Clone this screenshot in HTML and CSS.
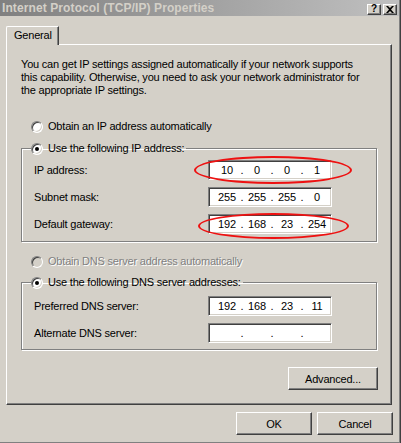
FILE: index.html
```html
<!DOCTYPE html>
<html lang="en">
<head>
  <meta charset="UTF-8">
  <title>Internet Protocol (TCP/IP) Properties</title>
  <link rel="stylesheet" href="styles.css">
</head>
<body>
  <div class="window">
    <!-- Title bar -->
    <div class="titlebar">
      <span class="title">Internet Protocol (TCP/IP) Properties</span>
      <div class="caption-btns">
        <div class="cap-btn">?</div>
        <div class="cap-btn">
          <svg width="8" height="7" viewBox="0 0 8 7"><path d="M0 0h2l2 2 2-2h2L5 3.5 8 7H6L4 5 2 7H0l3-3.5z" fill="#000"/></svg>
        </div>
      </div>
    </div>

    <!-- Tabs -->
    <div class="tabs">
      <div class="tab">General</div>
    </div>

    <div class="panel">
      <p class="intro">You can get IP settings assigned automatically if your network supports<br>this capability. Otherwise, you need to ask your network administrator for<br>the appropriate IP settings.</p>

      <div class="radio radio-first"><span class="dot"></span>Obtain an IP address automatically</div>

      <fieldset class="group group-ip">
        <legend><div class="radio"><span class="dot checked"></span>Use the following IP address:</div></legend>
        <div class="row">
          <span class="label">IP address:</span>
          <div class="ip-field">
            <span>10</span><i>.</i><span>0</span><i>.</i><span>0</span><i>.</i><span>1</span>
            <span class="mark mark-ip"></span>
          </div>
        </div>
        <div class="row">
          <span class="label">Subnet mask:</span>
          <div class="ip-field">
            <span>255</span><i>.</i><span>255</span><i>.</i><span>255</span><i>.</i><span>0</span>
          </div>
        </div>
        <div class="row">
          <span class="label">Default gateway:</span>
          <div class="ip-field">
            <span>192</span><i>.</i><span>168</span><i>.</i><span>23</span><i>.</i><span>254</span>
            <span class="mark mark-gw"></span>
          </div>
        </div>
      </fieldset>

      <div class="radio radio-dns disabled"><span class="dot"></span>Obtain DNS server address automatically</div>

      <fieldset class="group group-dns">
        <legend><div class="radio"><span class="dot checked"></span>Use the following DNS server addresses:</div></legend>
        <div class="row">
          <span class="label">Preferred DNS server:</span>
          <div class="ip-field">
            <span>192</span><i>.</i><span>168</span><i>.</i><span>23</span><i>.</i><span>11</span>
          </div>
        </div>
        <div class="row">
          <span class="label">Alternate DNS server:</span>
          <div class="ip-field">
            <span></span><i>.</i><span></span><i>.</i><span></span><i>.</i><span></span>
          </div>
        </div>
      </fieldset>

      <div class="adv-row">
        <button class="btn btn-adv">Advanced...</button>
      </div>
    </div>

    <div class="footer">
      <button class="btn">OK</button>
      <button class="btn">Cancel</button>
    </div>
  </div>
</body>
</html>
```

FILE: styles.css
```css
body {
  margin: 0;
  padding: 0;
  background: #d4d0c8;
  font-family: 'Liberation Sans', Arial, sans-serif;
  font-size: 11px;
  letter-spacing: -0.2px;
  color: #000;
}

.window {
  width: 401px;
  height: 443px;
  box-sizing: border-box;
  background: #d4d0c8;
  box-shadow: inset -1px 0 #404040, inset -2px 0 #808080, inset 0 -1px #808080;
  overflow: hidden;
}

/* Title bar */
.titlebar {
  height: 16px;
  margin-right: 2px;
  background: linear-gradient(to right, #808080, #c0c0c0);
  display: flex;
  align-items: center;
  justify-content: space-between;
  padding-left: 2px;
}

.title {
  color: #d4d0c8;
  font-weight: bold;
  font-size: 12px;
  letter-spacing: 0.1px;
  white-space: nowrap;
}

.caption-btns {
  display: flex;
  gap: 2px;
  margin-right: 2px;
  margin-top: 2px;
}

.cap-btn {
  width: 14px;
  height: 11px;
  box-sizing: border-box;
  background: #d4d0c8;
  border: 1px solid;
  border-color: #fff #404040 #404040 #fff;
  box-shadow: inset -1px -1px #808080;
  display: flex;
  align-items: center;
  justify-content: center;
  font-weight: bold;
  font-size: 10px;
  line-height: 1;
}

/* Tabs */
.tabs {
  padding: 10px 0 0 6px;
  height: 18px;
  display: flex;
}

.tab {
  width: 53px;
  height: 19px;
  box-sizing: border-box;
  border-top: 1px solid #fff;
  border-left: 1px solid #fff;
  border-right: 1px solid #404040;
  border-top-left-radius: 2px;
  box-shadow: inset -1px 0 #808080;
  background: #d4d0c8;
  position: relative;
  z-index: 1;
  padding: 2px 0 0 7px;
  line-height: 13px;
}

/* Panel */
.panel {
  margin-left: 6px;
  width: 386px;
  height: 361px;
  box-sizing: border-box;
  border: 1px solid;
  border-color: #fff #404040 #404040 #fff;
  box-shadow: inset -1px -1px #808080;
  display: flex;
  flex-direction: column;
}

.intro {
  margin: 13px 0 0 14px;
  line-height: 13px;
  white-space: nowrap;
}

.radio {
  display: flex;
  align-items: center;
  height: 13px;
  line-height: 13px;
  white-space: nowrap;
}

.radio .dot {
  width: 12px;
  height: 12px;
  box-sizing: border-box;
  border-radius: 50%;
  border: 1px solid;
  border-color: #808080 #fff #fff #808080;
  box-shadow: inset 1px 1px #404040, inset -1px -1px #d4d0c8;
  background: #fff;
  margin-right: 5px;
  position: relative;
}

.radio .dot.checked::after {
  content: '';
  position: absolute;
  left: 3px;
  top: 3px;
  width: 4px;
  height: 4px;
  border-radius: 50%;
  background: #000;
}

.radio-first {
  margin: 23px 0 0 24px;
}

.radio.disabled {
  color: #808080;
  text-shadow: 1px 1px #fff;
}

.radio.disabled .dot {
  background: #d4d0c8;
}

.radio-dns {
  margin: 13px 0 0 24px;
}

/* Group boxes */
.group {
  margin: 9px 0 0 14px;
  width: 356px;
  box-sizing: border-box;
  border: 1px solid #808080;
  box-shadow: inset 1px 1px #fff, 1px 1px #fff;
  padding: 5px 0 7px 12px;
  display: flex;
  flex-direction: column;
  gap: 7px;
}

.group legend {
  margin-left: -3px;
  padding: 0 2px 0 0;
}

.group-dns {
  margin-top: 8px;
  padding: 7px 0 6px 12px;
}

.row {
  display: flex;
  align-items: center;
  height: 20px;
}

.label {
  width: 174px;
  white-space: nowrap;
}

.ip-field {
  position: relative;
  width: 124px;
  height: 20px;
  box-sizing: border-box;
  background: #fff;
  border: 1px solid;
  border-color: #808080 #fff #fff #808080;
  box-shadow: inset 1px 1px #404040, inset -1px -1px #d4d0c8;
  padding-left: 6px;
  display: grid;
  grid-template-columns: 24px 6px 24px 6px 24px 6px 24px;
  align-items: center;
  text-align: center;
  line-height: 13px;
}

.ip-field i {
  font-style: normal;
}

/* Red annotation ellipses */
.mark {
  position: absolute;
  border: 2px solid #ee1111;
  border-radius: 50%;
  box-sizing: border-box;
}

.mark-ip {
  left: -15px;
  top: -5px;
  width: 158px;
  height: 28px;
}

.mark-gw {
  left: -11px;
  top: -2px;
  width: 151px;
  height: 26px;
}

/* Buttons */
.btn {
  height: 23px;
  width: 76px;
  box-sizing: border-box;
  background: #d4d0c8;
  border: 1px solid;
  border-color: #fff #404040 #404040 #fff;
  box-shadow: inset -1px -1px #808080;
  font-family: 'Liberation Sans', Arial, sans-serif;
  font-size: 11px;
  letter-spacing: -0.2px;
  color: #000;
  padding: 0;
}

.adv-row {
  display: flex;
  justify-content: flex-end;
  margin: 17px 13px 0 0;
}

.btn-adv {
  width: 90px;
}

.footer {
  display: flex;
  justify-content: flex-end;
  gap: 5px;
  margin: 7px 8px 0 0;
}
```
